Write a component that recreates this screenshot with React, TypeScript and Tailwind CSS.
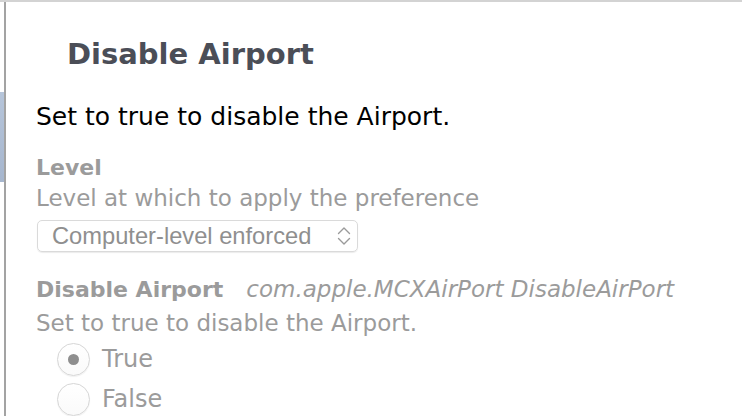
const ui = { fontFamily: '"DejaVu Sans", "Liberation Sans", sans-serif' };
const sys = { fontFamily: '"Liberation Sans", Arial, sans-serif' };

function Radio({ label, checked }: { label: string; checked?: boolean }) {
  return (
    <div className="flex items-center h-[32px] ml-[21px]">
      <div className="w-[33px] h-[33px] rounded-full border border-[#d6d6d6] bg-gradient-to-b from-white to-[#fafafa] shadow-[0_1px_1px_rgba(0,0,0,0.06)] flex items-center justify-center">
        {checked && <div className="w-[11px] h-[11px] rounded-full bg-[#8e8e8e]" />}
      </div>
      <span className="ml-[12px] text-[24px] leading-[32px] text-[#9b9b9b]">{label}</span>
    </div>
  );
}

export default function App() {
  return (
    <div className="w-[742px] h-[416px] overflow-hidden bg-white flex flex-col" style={ui}>
      <div className="h-[2px] bg-[#d3d3d3] shrink-0" />
      <div className="flex flex-1">
        {/* sidebar edge */}
        <div className="w-[4px] flex flex-col">
          <div className="mt-[90px] h-[90px] bg-gradient-to-b from-[#b6c5da] to-[#a6b6ce]" />
        </div>
        <div className="w-[2px] bg-[#a3a3a3]" />

        <div className="flex-1 pl-[30px] flex flex-col">
          <h1 className="mt-[35px] ml-[31px] text-[29px] leading-[34px] font-bold text-[#4b4e57]">
            Disable Airport
          </h1>

          <p className="mt-[31px] text-[25px] leading-[30px] text-black">
            Set to true to disable the Airport.
          </p>

          <div className="mt-[21px] text-[22px] leading-[30px] font-bold text-[#9b9b9b]">Level</div>
          <div className="text-[23px] leading-[30px] text-[#9b9b9b]">
            Level at which to apply the preference
          </div>

          <div className="mt-[7px] ml-[1px] w-[321px] h-[32px] rounded-[5px] border border-[#dadada] shadow-[0_1px_1px_rgba(0,0,0,0.08)] flex items-center justify-between pl-[14px] pr-[5px]">
            <span className="text-[23.7px] leading-[30px] text-[#8f8f8f]" style={sys}>
              Computer-level enforced
            </span>
            <svg width="16" height="22" viewBox="0 0 16 22" fill="none" stroke="#9a9a9a" strokeWidth="1.4" strokeLinecap="round" strokeLinejoin="round">
              <path d="M2.5 8.5 L8 3 L13.5 8.5" />
              <path d="M2.5 13.5 L8 19 L13.5 13.5" />
            </svg>
          </div>

          <div className="mt-[22px] flex items-baseline text-[#9b9b9b]">
            <span className="text-[22px] leading-[30px] font-bold">Disable Airport</span>
            <span className="ml-[23px] text-[23px] leading-[30px] italic">com.apple.MCXAirPort DisableAirPort</span>
          </div>
          <div className="mt-[3px] text-[23px] leading-[30px] text-[#9b9b9b]">
            Set to true to disable the Airport.
          </div>

          <div className="mt-[5px] flex flex-col gap-[8px]">
            <Radio label="True" checked />
            <Radio label="False" />
          </div>
        </div>
      </div>
    </div>
  );
}
